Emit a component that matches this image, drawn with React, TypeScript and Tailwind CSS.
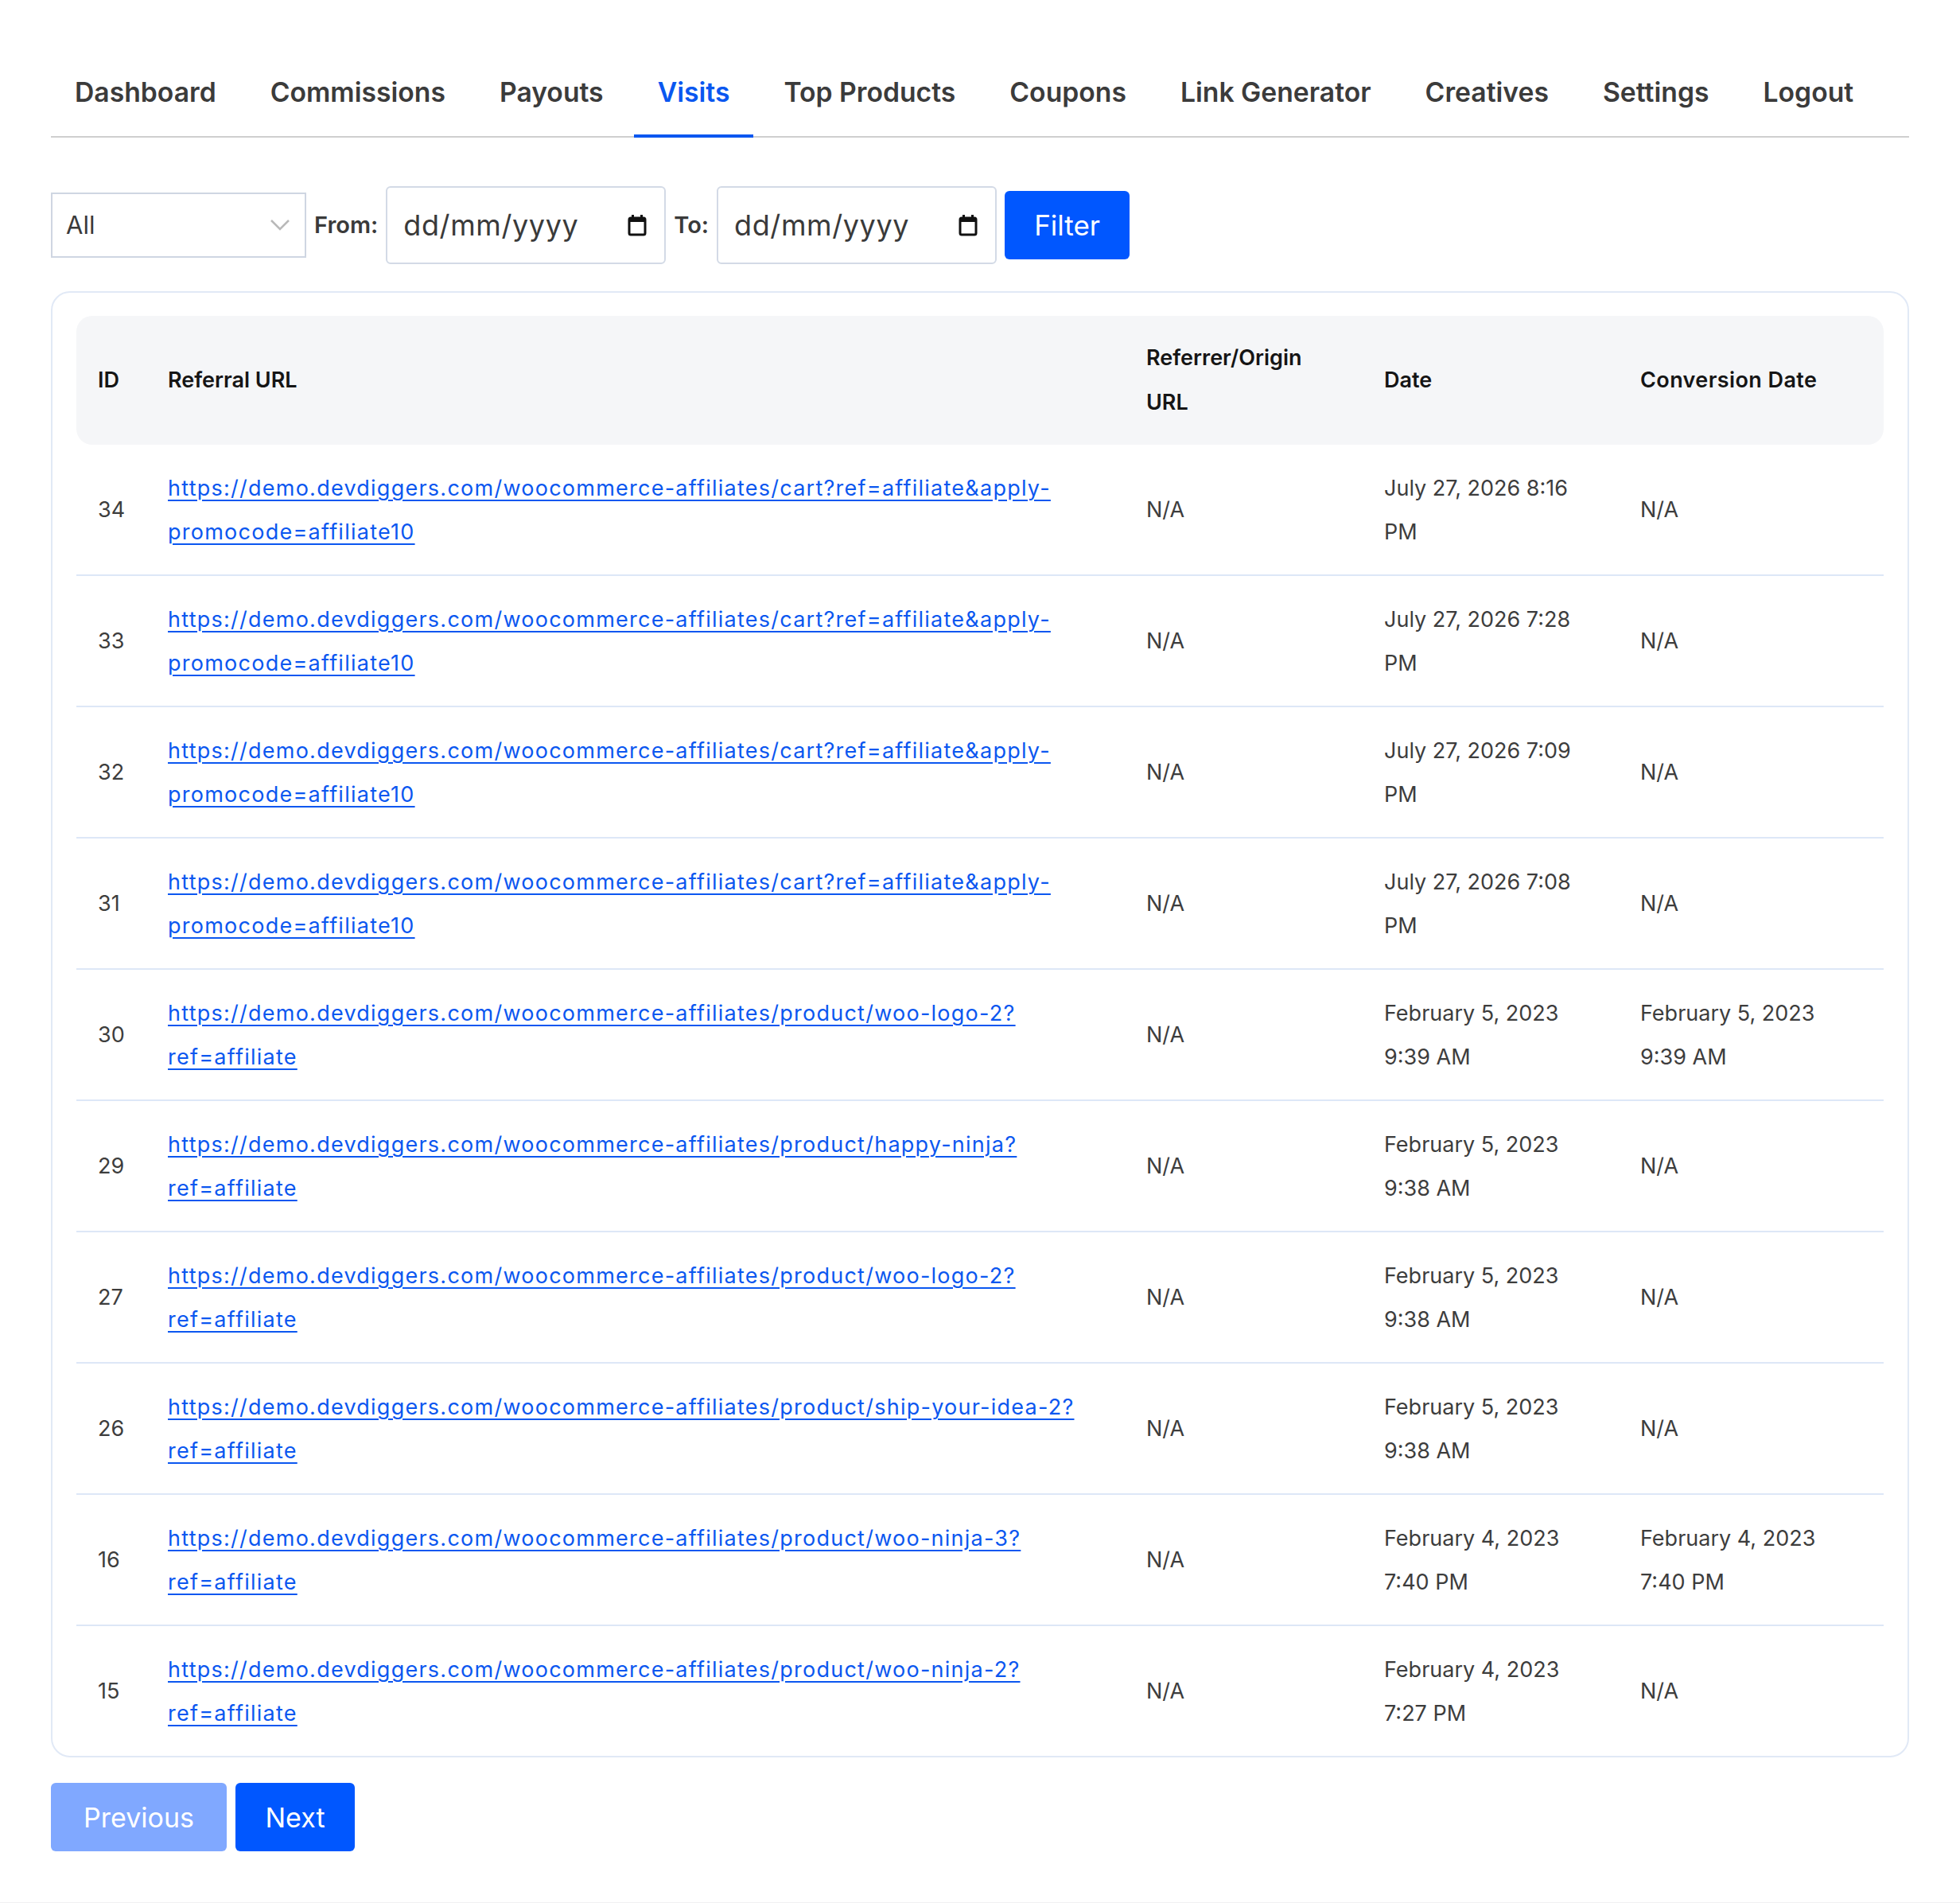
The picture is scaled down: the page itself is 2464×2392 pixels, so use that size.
import React from "react";

const navItems = [
  "Dashboard",
  "Commissions",
  "Payouts",
  "Visits",
  "Top Products",
  "Coupons",
  "Link Generator",
  "Creatives",
  "Settings",
  "Logout",
];

const base = "https://demo.devdiggers.com/woocommerce-affiliates/";
const cartUrl = [base + "cart?ref=affiliate&apply-", "promocode=affiliate10"];

type Visit = {
  id: number;
  url: string[];
  date: string[];
  conversion: string[] | null;
};

const visits: Visit[] = [
  { id: 34, url: cartUrl, date: ["July 27, 2026 8:16", "PM"], conversion: null },
  { id: 33, url: cartUrl, date: ["July 27, 2026 7:28", "PM"], conversion: null },
  { id: 32, url: cartUrl, date: ["July 27, 2026 7:09", "PM"], conversion: null },
  { id: 31, url: cartUrl, date: ["July 27, 2026 7:08", "PM"], conversion: null },
  {
    id: 30,
    url: [base + "product/woo-logo-2?", "ref=affiliate"],
    date: ["February 5, 2023", "9:39 AM"],
    conversion: ["February 5, 2023", "9:39 AM"],
  },
  {
    id: 29,
    url: [base + "product/happy-ninja?", "ref=affiliate"],
    date: ["February 5, 2023", "9:38 AM"],
    conversion: null,
  },
  {
    id: 27,
    url: [base + "product/woo-logo-2?", "ref=affiliate"],
    date: ["February 5, 2023", "9:38 AM"],
    conversion: null,
  },
  {
    id: 26,
    url: [base + "product/ship-your-idea-2?", "ref=affiliate"],
    date: ["February 5, 2023", "9:38 AM"],
    conversion: null,
  },
  {
    id: 16,
    url: [base + "product/woo-ninja-3?", "ref=affiliate"],
    date: ["February 4, 2023", "7:40 PM"],
    conversion: ["February 4, 2023", "7:40 PM"],
  },
  {
    id: 15,
    url: [base + "product/woo-ninja-2?", "ref=affiliate"],
    date: ["February 4, 2023", "7:27 PM"],
    conversion: null,
  },
];

const cols = "grid grid-cols-[88px_1230px_299px_322px_1fr] items-center";

const CalendarIcon = () => (
  <svg width="24" height="28" viewBox="0 0 24 28" fill="none">
    <rect x="5" y="1" width="3" height="5" fill="#111" />
    <rect x="16" y="1" width="3" height="5" fill="#111" />
    <rect x="2" y="5" width="20" height="21" rx="2" stroke="#111" strokeWidth="3" />
    <rect x="2" y="5" width="20" height="5" fill="#111" />
  </svg>
);

const DateInput = () => (
  <div className="flex items-center justify-between w-[352px] h-[98px] border-2 border-[#d3dae6] rounded-[6px] pl-[20px] pr-[22px] bg-white">
    <span className="text-[36px] tracking-[0.6px] text-[#3a3a3a]">dd/mm/yyyy</span>
    <CalendarIcon />
  </div>
);

const App = () => {
  return (
    <div
      className="min-h-screen bg-[#f0f0f1]"
      style={{ fontFamily: "Inter, 'Open Sans', sans-serif" }}
    >
      <div className="bg-white px-16 pt-[96px] pb-[64px]">
        {/* Tabs */}
        <nav className="flex gap-[8px] border-b-2 border-[#cfcfcf]">
          {navItems.map((item) => (
            <a
              key={item}
              className={
                item === "Visits"
                  ? "px-[30px] pb-[33px] text-[33.7px] leading-[40px] font-semibold text-[#0a57f0] border-b-4 border-[#0a57f0] -mb-[2px]"
                  : "px-[30px] pb-[33px] text-[33.7px] leading-[40px] font-semibold text-[#3b3b3b] border-b-4 border-transparent -mb-[2px]"
              }
            >
              {item}
            </a>
          ))}
        </nav>

        {/* Filters */}
        <div className="flex items-center gap-[10px] mt-[61px]">
          <div className="flex items-center justify-between w-[321px] h-[82px] border-2 border-[#cfd6e2] pl-[17px] pr-[18px]">
            <span className="text-[31px] text-[#3a3a3a]">All</span>
            <svg width="26" height="16" viewBox="0 0 26 16" fill="none">
              <polyline points="2,2 13,13 24,2" stroke="#b9b9b9" strokeWidth="2.5" />
            </svg>
          </div>
          <span className="text-[29px] font-semibold text-[#3a3a3a]">From:</span>
          <DateInput />
          <span className="text-[29px] font-semibold text-[#3a3a3a]">To:</span>
          <DateInput />
          <button className="w-[157px] h-[86px] bg-[#0057ff] rounded-[6px] text-white text-[35px]">
            Filter
          </button>
        </div>

        {/* Visits table */}
        <div className="mt-[34px] border-2 border-[#e1e9f6] rounded-[24px] px-[30px] pt-[29px]">
          <div className={`${cols} bg-[#f5f6f8] rounded-[20px] py-[25px] text-[27px] leading-[56px] font-semibold text-[#151515]`}>
            <div className="px-[27px]">ID</div>
            <div className="px-[27px]">Referral URL</div>
            <div className="px-[27px]">
              Referrer/Origin
              <br />
              URL
            </div>
            <div className="px-[27px]">Date</div>
            <div className="px-[27px] tracking-[0.4px]">Conversion Date</div>
          </div>

          {visits.map((v) => (
            <div
              key={v.id}
              className={`${cols} py-[26.5px] border-b-2 border-[#dde7f7] last:border-b-0 text-[27px] leading-[55px] text-[#3d3d3d]`}
            >
              <div className="px-[27px]">{v.id}</div>
              <div className="px-[27px]">
                <a className="text-[#0b57f0] tracking-[1.25px] underline decoration-[2px] underline-offset-[5px] cursor-pointer">
                  {v.url[0]}
                  <br />
                  {v.url[1]}
                </a>
              </div>
              <div className="px-[27px]">N/A</div>
              <div className="px-[27px]">
                {v.date[0]}
                <br />
                {v.date[1]}
              </div>
              <div className="px-[27px]">
                {v.conversion ? (
                  <>
                    {v.conversion[0]}
                    <br />
                    {v.conversion[1]}
                  </>
                ) : (
                  "N/A"
                )}
              </div>
            </div>
          ))}
        </div>

        {/* Pagination */}
        <div className="flex gap-[11px] mt-[32px]">
          <button className="w-[221px] h-[86px] bg-[#80a8ff] rounded-[6px] text-white text-[34px]">
            Previous
          </button>
          <button className="w-[150px] h-[86px] bg-[#0057ff] rounded-[6px] text-white text-[34px]">
            Next
          </button>
        </div>
      </div>
    </div>
  );
};

export default App;
